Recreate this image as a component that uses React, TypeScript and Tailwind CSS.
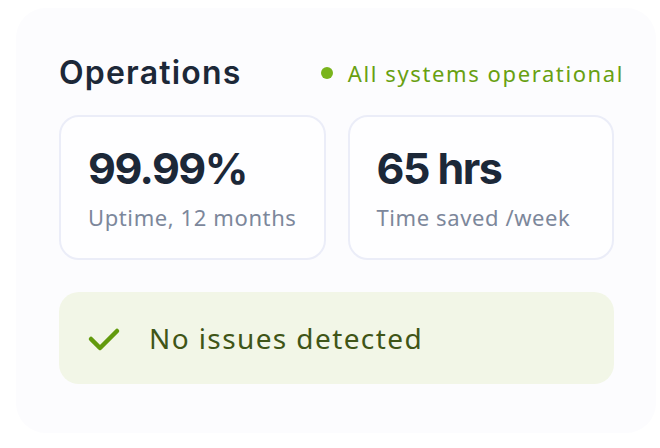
import React from "react";

const stats = [
  { value: "99.99%", label: "Uptime, 12 months" },
  { value: "65 hrs", label: "Time saved /week" },
];

const App: React.FC = () => {
  return (
    <div className="w-[660px] h-[448px] bg-white overflow-hidden pt-[8px] pl-[16px] font-['Inter',sans-serif]">
      <div className="w-[640px] h-[425px] rounded-[30px] bg-[#fcfcfe] pl-[43px] pr-[42px] pt-[45px]">
        {/* Header */}
        <div className="flex items-center justify-between h-[40px]">
          <h2 className="text-[32px] font-semibold tracking-[1.2px] text-[#1c2838]">
            Operations
          </h2>
          <div className="flex items-center gap-[15px] mr-[-10px]">
            <span className="w-[12px] h-[12px] rounded-full bg-[#79b41c]" />
            <span className="text-[22px] text-[#68a010] font-['Noto_Sans',sans-serif] tracking-[1.6px]">
              All systems operational
            </span>
          </div>
        </div>

        {/* Stats */}
        <div className="grid grid-cols-2 gap-[22px] mt-[22px]">
          {stats.map((s) => (
            <div
              key={s.label}
              className="h-[145px] rounded-[20px] border-2 border-[#ebedf8] bg-[#fefeff] pl-[27px] pt-[22px]"
            >
              <div className="text-[43px] leading-[58px] font-bold tracking-[-1.5px] text-[#1c2838]">
                {s.value}
              </div>
              <div className="mt-[4px] text-[22px] text-[#7c879b] font-['Noto_Sans',sans-serif] tracking-[0.6px]">
                {s.label}
              </div>
            </div>
          ))}
        </div>

        {/* Status */}
        <div className="mt-[32px] h-[92px] rounded-[20px] bg-[#f2f6e7] flex items-center pl-[28px] gap-[26px]">
          <svg width="36" height="30" viewBox="0 0 36 30" fill="none">
            <path
              d="M4 16 L13 25 L30 8"
              stroke="#629a0d"
              strokeWidth="4.5"
              strokeLinecap="round"
              strokeLinejoin="round"
            />
          </svg>
          <span className="text-[28px] text-[#3f5517] font-['Noto_Sans',sans-serif] tracking-[1.4px]">
            No issues detected
          </span>
        </div>
      </div>
    </div>
  );
};

export default App;
